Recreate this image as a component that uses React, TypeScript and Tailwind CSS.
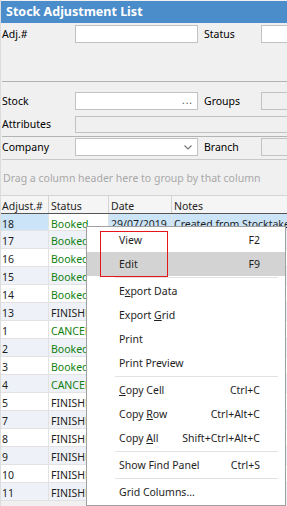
import React from "react";

const ROWS: { id: string; status: string }[] = [
  { id: "18", status: "Booked" },
  { id: "17", status: "Booked" },
  { id: "16", status: "Booked" },
  { id: "15", status: "Booked" },
  { id: "14", status: "Booked" },
  { id: "13", status: "FINISHED" },
  { id: "1", status: "CANCELLED" },
  { id: "2", status: "Booked" },
  { id: "3", status: "Booked" },
  { id: "4", status: "CANCELLED" },
  { id: "5", status: "FINISHED" },
  { id: "7", status: "FINISHED" },
  { id: "8", status: "FINISHED" },
  { id: "9", status: "FINISHED" },
  { id: "10", status: "FINISHED" },
  { id: "11", status: "FINISHED" },
];

type MenuEntry =
  | { sep: true }
  | { label: React.ReactNode; key?: string; active?: boolean };

const MENU: MenuEntry[] = [
  { label: "View", key: "F2" },
  { label: "Edit", key: "F9", active: true },
  { sep: true },
  { label: <>E<u>x</u>port Data</> },
  { label: <>Export <u>G</u>rid</> },
  { label: "Print" },
  { label: "Print Preview" },
  { sep: true },
  { label: <><u>C</u>opy Cell</>, key: "Ctrl+C" },
  { label: <>Copy <u>R</u>ow</>, key: "Ctrl+Alt+C" },
  { label: <>Copy <u>A</u>ll</>, key: "Shift+Ctrl+Alt+C" },
  { sep: true },
  { label: "Show Find Panel", key: "Ctrl+S" },
  { sep: true },
  { label: "Grid Columns..." },
];

function ContextMenu() {
  return (
    <div className="absolute left-[85px] top-[226px] w-[200px] h-[280px] bg-white border border-[#a0a0a0] pt-px">
      {MENU.map((m, i) =>
        "sep" in m ? (
          <div key={i} className="h-[3px] flex items-center pl-[28px] pr-[7px]">
            <div className="h-px w-full bg-[#e2e2e2]" />
          </div>
        ) : (
          <div
            key={i}
            className={`h-[24px] flex items-center justify-between pl-[32px] pr-[25px] ${
              m.active ? "bg-[#d3d3d3]" : ""
            }`}
          >
            <span>{m.label}</span>
            {m.key && <span>{m.key}</span>}
          </div>
        )
      )}
      {/* red highlight annotation */}
      <div className="absolute left-[13px] top-[4px] w-[68px] h-[46px] border border-[#e8141c]" />
    </div>
  );
}

function Label({ children }: { children: React.ReactNode }) {
  return <div className="w-[74px] shrink-0 pl-[1px] text-black">{children}</div>;
}

function Label2({ children }: { children: React.ReactNode }) {
  return <div className="w-[63px] shrink-0 pl-[6px] text-black">{children}</div>;
}

function Field({ w, grey, children }: { w: string; grey?: boolean; children?: React.ReactNode }) {
  return (
    <div
      className={`${w} h-full border border-[#c2c2c2] ${
        grey ? "bg-[#f0f0f0]" : "bg-white"
      } flex items-center justify-end pr-[4px] shrink-0`}
    >
      {children}
    </div>
  );
}

export default function App() {
  return (
    <div className="relative w-[287px] h-[506px] overflow-hidden bg-[#f0f0f0] border-l border-[#dcdcdc] text-[10.5px] leading-none text-[#1e1e1e] font-['Noto_Sans',sans-serif]">
      {/* Title */}
      <div className="h-[22px] mt-px bg-[#4b8dcb] text-white font-bold text-[12.5px] flex items-center pl-[5px]">
        Stock Adjustment List
      </div>

      {/* Row 1 */}
      <div className="mt-[1px] h-[19px] flex items-center pt-[1px]">
        <Label>Adj.#</Label>
        <Field w="w-[123px]" />
        <Label2>Status</Label2>
        <Field w="w-[40px]" />
      </div>

      <div className="mt-[38px] ml-[1px] h-px bg-[#b4b4b4]" />

      {/* Stock */}
      <div className="mt-[10px] h-[18px] flex items-center">
        <Label>Stock</Label>
        <Field w="w-[123px]">
          <span className="text-[#555] tracking-[1px] text-[10px] -mt-[3px]">...</span>
        </Field>
        <Label2>Groups</Label2>
        <Field w="w-[40px]" grey />
      </div>

      {/* Attributes */}
      <div className="mt-[6px] h-[17px] flex items-center">
        <Label>Attributes</Label>
        <Field w="w-[220px]" grey />
      </div>

      <div className="mt-[3px] ml-[1px] h-px bg-[#b4b4b4]" />

      {/* Company */}
      <div className="mt-[1px] h-[18px] flex items-center">
        <Label>Company</Label>
        <Field w="w-[123px]">
          <svg width="8" height="5" viewBox="0 0 8 5" className="mr-[1px]">
            <path d="M0.5 0.5 L4 4 L7.5 0.5" fill="none" stroke="#777" strokeWidth="1.2" />
          </svg>
        </Field>
        <Label2>Branch</Label2>
        <Field w="w-[40px]" grey />
      </div>

      <div className="mt-[3px] ml-[1px] h-px bg-[#c8c8c8]" />

      {/* Group panel */}
      <div className="h-[35px] flex items-center pl-[2px] pt-[2px] text-[#a8a8a8]">
        Drag a column header here to group by that column
      </div>

      {/* Grid */}
      <div className="bg-white">
        <div className="h-[19px] flex border-t border-b border-[#d4d4d4] bg-[#f5f5f5]">
          <div className="w-[48px] pt-[3px] pl-[1px] flex items-center border-r border-[#d4d4d4]">Adjust.#</div>
          <div className="w-[60px] pt-[3px] pl-[2px] flex items-center border-r border-[#d4d4d4]">Status</div>
          <div className="w-[63px] pt-[3px] pl-[2px] flex items-center border-r border-[#d4d4d4]">Date</div>
          <div className="flex-1 pt-[3px] pl-[2px] flex items-center">Notes</div>
        </div>
        {ROWS.map((r, i) => {
          const sel = i === 0;
          const alt = i % 2 === 1;
          const bg = alt ? "bg-[#eef2f8]" : "bg-white";
          return (
            <div
              key={r.id}
              className={`h-[18px] flex border-b border-[#e2e2e2] ${bg} ${
                sel ? "border-t border-t-[#555] border-t-dotted -mt-px" : ""
              }`}
            >
              <div
                className={`w-[48px] pt-[4px] pl-[1px] flex items-center border-r border-[#e2e2e2] ${
                  sel ? "bg-[#cce4f7]" : ""
                }`}
              >
                {r.id}
              </div>
              <div
                className={`w-[60px] pt-[4px] pl-[2px] flex items-center whitespace-nowrap overflow-hidden border-r border-[#e2e2e2] ${
                  r.status === "FINISHED" ? "text-[#1e1e1e]" : "text-[#108010]"
                }`}
              >
                {r.status}
              </div>
              <div
                className={`w-[63px] pt-[4px] pl-[2px] flex items-center whitespace-nowrap overflow-hidden border-r border-[#e2e2e2] ${
                  sel ? "bg-[#cce4f7]" : ""
                }`}
              >
                {sel ? "29/07/2019" : ""}
              </div>
              <div
                className={`flex-1 pt-[4px] pl-[2px] flex items-center whitespace-nowrap overflow-hidden ${
                  sel ? "bg-[#cce4f7]" : ""
                }`}
              >
                {sel ? "Created from Stocktake" : ""}
              </div>
            </div>
          );
        })}
      </div>

      <ContextMenu />
    </div>
  );
}
